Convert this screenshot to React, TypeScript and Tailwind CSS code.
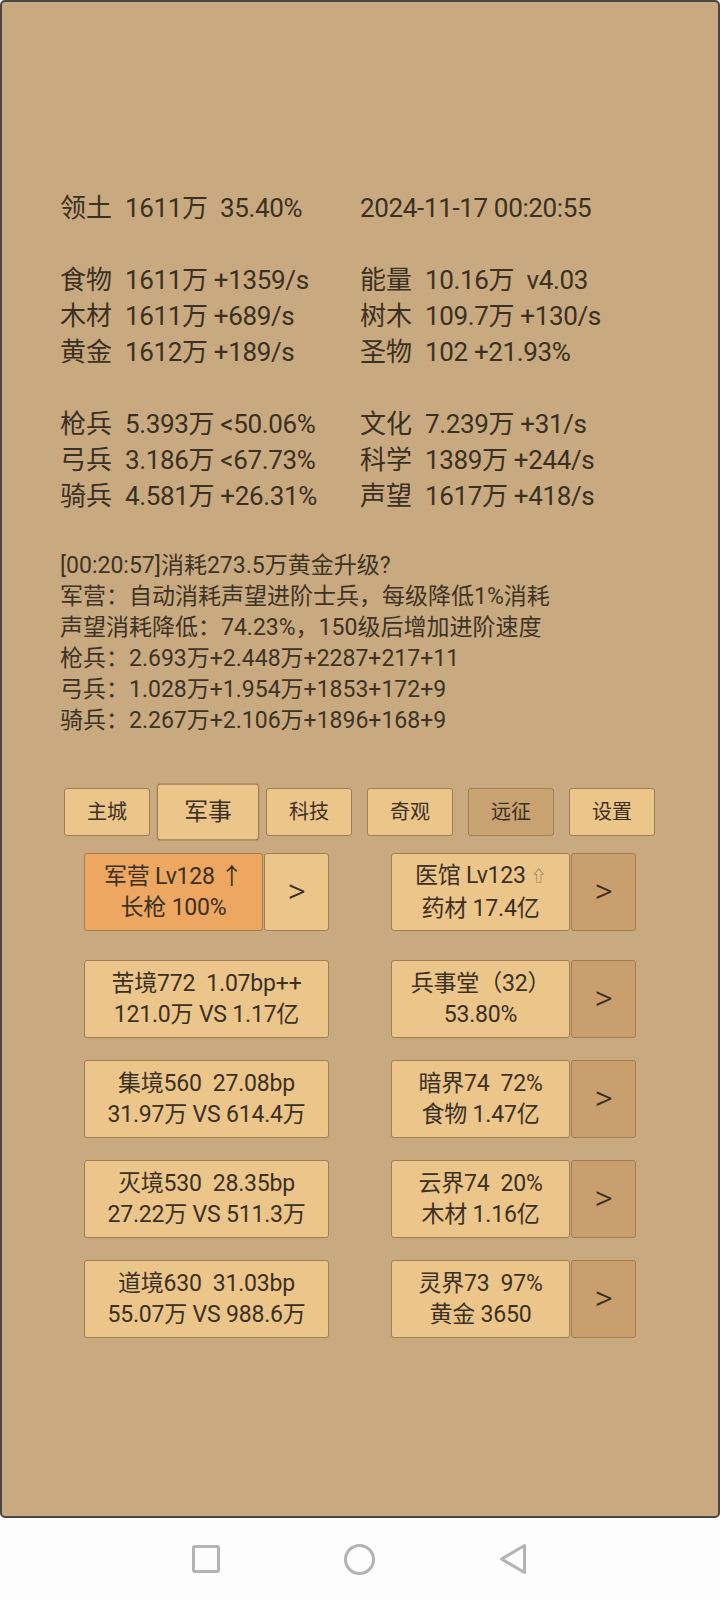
import React from 'react';

type Cell = [string | null, string];

const stats: (Cell[] | null)[] = [
  [['领土', '1611万  35.40%'], [null, '2024-11-17 00:20:55']],
  null,
  [['食物', '1611万 +1359/s'], ['能量', '10.16万  v4.03']],
  [['木材', '1611万 +689/s'], ['树木', '109.7万 +130/s']],
  [['黄金', '1612万 +189/s'], ['圣物', '102 +21.93%']],
  null,
  [['枪兵', '5.393万 <50.06%'], ['文化', '7.239万 +31/s']],
  [['弓兵', '3.186万 <67.73%'], ['科学', '1389万 +244/s']],
  [['骑兵', '4.581万 +26.31%'], ['声望', '1617万 +418/s']],
];

const logLines = [
  '[00:20:57]消耗273.5万黄金升级?',
  '军营：自动消耗声望进阶士兵，每级降低1%消耗',
  '声望消耗降低：74.23%，150级后增加进阶速度',
  '枪兵：2.693万+2.448万+2287+217+11',
  '弓兵：1.028万+1.954万+1853+172+9',
  '骑兵：2.267万+2.106万+1896+168+9',
];

const tabs = ['主城', '军事', '科技', '奇观', '远征', '设置'];

const leftCards = [
  ['苦境772  1.07bp++', '121.0万 VS 1.17亿'],
  ['集境560  27.08bp', '31.97万 VS 614.4万'],
  ['灭境530  28.35bp', '27.22万 VS 511.3万'],
  ['道境630  31.03bp', '55.07万 VS 988.6万'],
];

const rightCards = [
  ['兵事堂（32）', '53.80%'],
  ['暗界74  72%', '食物 1.47亿'],
  ['云界74  20%', '木材 1.16亿'],
  ['灵界73  97%', '黄金 3650'],
];

const font = { fontFamily: 'Roboto, "Noto Sans CJK SC", "DejaVu Sans", sans-serif' };

function StatCell({ cell }: { cell: Cell }) {
  const [label, value] = cell;
  if (!label) return <div className="whitespace-pre">{value}</div>;
  return (
    <div className="flex whitespace-pre">
      <span className="w-[65px] tracking-normal">{label}</span>
      <span>{value}</span>
    </div>
  );
}

function Card({ lines, className = '' }: { lines: React.ReactNode[]; className?: string }) {
  return (
    <div
      className={`flex flex-col items-center justify-center h-[78px] rounded-[3px] border border-[#a07e52] text-[23px] leading-[31px] tracking-[-0.2px] whitespace-pre ${className}`}
    >
      {lines.map((l, i) => (
        <div key={i}>{l}</div>
      ))}
    </div>
  );
}

function Arrow({ dark }: { dark?: boolean }) {
  return (
    <div
      className={`w-[65px] h-[78px] flex items-center justify-center rounded-[3px] border border-[#a07e52] text-[35px] font-light ${
        dark ? 'bg-[#c9a06d]' : 'bg-[#ecc58b]'
      }`}
    >
      &gt;
    </div>
  );
}

export default function App() {
  return (
    <div className="w-[720px] h-[1600px] flex flex-col text-[#3a3123]" style={font}>
      <div className="h-[1518px] bg-[#c9a97f] border-2 border-[#4a4641] rounded-[5px] pt-[188px]">
        <div className="pl-[58px] text-[26px] leading-[36px] tracking-[-0.35px]">
          {stats.map((row, i) =>
            row ? (
              <div key={i} className="grid grid-cols-[300px_1fr]">
                <StatCell cell={row[0]} />
                <StatCell cell={row[1]} />
              </div>
            ) : (
              <div key={i} className="h-[36px]" />
            )
          )}
        </div>

        <div className="pl-[58px] mt-[36px] text-[23px] leading-[31px] text-[#3d3426]">
          {logLines.map((l) => (
            <div key={l}>{l}</div>
          ))}
        </div>

        <div className="ml-[62px] mt-[52px] flex gap-[15px]">
          {tabs.map((t) => (
            <div
              key={t}
              className={`w-[86px] h-[48px] flex items-center justify-center rounded-[3px] border border-[#a07e52] text-[20px] ${
                t === '远征' ? 'bg-[#c9a271]' : 'bg-[#ecc58b]'
              } ${t === '军事' ? 'scale-[1.19]' : ''}`}
            >
              {t}
            </div>
          ))}
        </div>

        <div className="ml-[82px] mt-[17px] flex flex-col gap-[22px]">
          <div className="flex gap-[62px] mb-[7px]">
            <div className="w-[245px] flex gap-[1px]">
              <Card className="flex-1 bg-[#eda761]" lines={['军营 Lv128 ↑', '长枪 100%']} />
              <Arrow />
            </div>
            <div className="w-[245px] flex gap-[1px]">
              <Card
                className="flex-1 bg-[#ecc58b]"
                lines={[
                  <span key="a">
                    医馆 Lv123 <span className="text-[15px] text-[#8d7656] align-middle">⇧</span>
                  </span>,
                  '药材 17.4亿',
                ]}
              />
              <Arrow dark />
            </div>
          </div>
          {leftCards.map((lc, i) => (
            <div key={i} className="flex gap-[62px]">
              <Card className="w-[245px] bg-[#ecc58b]" lines={lc} />
              <div className="w-[245px] flex gap-[1px]">
                <Card className="flex-1 bg-[#ecc58b]" lines={rightCards[i]} />
                <Arrow dark />
              </div>
            </div>
          ))}
        </div>
      </div>

      <div className="flex-1 bg-[#fdfdfd] flex items-center pl-[192px] gap-[124px]">
        <div className="w-[28px] h-[28px] border-[3px] border-[#b3b3b3] rounded-[3px]" />
        <div className="w-[31px] h-[31px] border-[3px] border-[#b3b3b3] rounded-full" />
        <svg width="28" height="32" viewBox="0 0 28 32">
          <path
            d="M25.5 2.5 L25.5 29.5 L2.5 16 Z"
            fill="none"
            stroke="#b3b3b3"
            strokeWidth="3"
            strokeLinejoin="round"
          />
        </svg>
      </div>
    </div>
  );
}
